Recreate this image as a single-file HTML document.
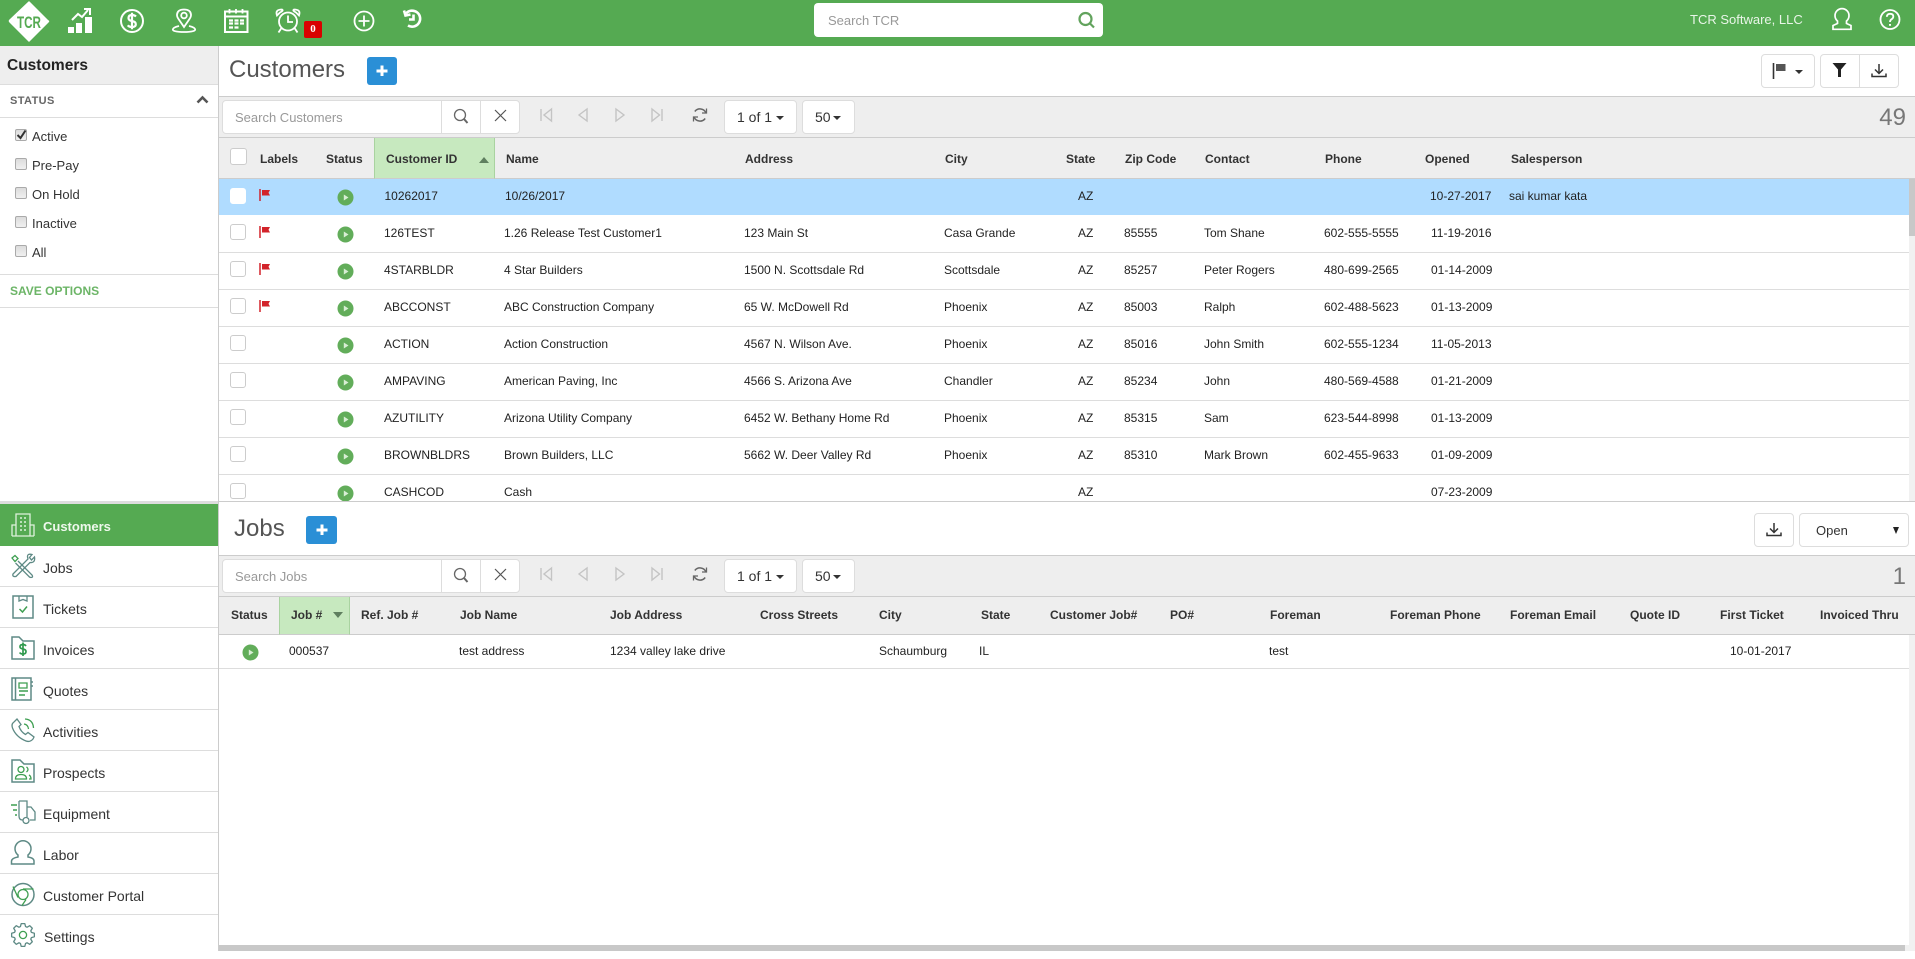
<!DOCTYPE html>
<html><head><meta charset="utf-8"><title>TCR Customers</title>
<style>
*{box-sizing:border-box}
html,body{margin:0;padding:0;width:1915px;height:951px;overflow:hidden;background:#fff;font-family:"Liberation Sans",Arial,sans-serif;color:#333}
.a{position:absolute}
.t{position:absolute;white-space:nowrap}
svg{position:absolute;display:block;overflow:visible}
#top{left:0;top:0;width:1915px;height:46px;background:#55aa52}
.hd{position:absolute;height:40px;line-height:42px;font-size:12px;font-weight:bold;color:#333;white-space:nowrap}
.row{position:absolute;left:219px;width:1690px;height:37px;border-bottom:1px solid #ddd;font-size:12px;color:#222;line-height:34px}
.row span{position:absolute;top:0;white-space:nowrap}
.row i{position:absolute;left:11px;top:8px;width:16px;height:16px;border:1px solid #ccc;border-radius:3px;background:#fff}
.fl{position:absolute;left:40px;top:10px}
.st{position:absolute;left:117.500px;top:9.500px}
.btn{position:absolute;background:#fff;border:1px solid #ddd;border-radius:4px}
.side{position:absolute;left:0;width:218px;border-bottom:1px solid #ddd;font-size:14px;color:#333}
.side b{position:absolute;left:43px;top:0;font-weight:normal;white-space:nowrap}
.cb{position:absolute;left:15px;width:12px;height:12px;border:1px solid #aaa;border-radius:2px;background:linear-gradient(#dcdcdc,#f0f0f0)}
.lb{position:absolute;left:32px;font-size:13px;color:#333;white-space:nowrap;line-height:16px}
.caret{position:absolute;width:0;height:0;border-left:4px solid transparent;border-right:4px solid transparent;border-top:4px solid #333}
</style></head><body>

<div class="a" id="top"></div>
<!-- logo -->
<svg style="left:0;top:0" width="60" height="46" viewBox="0 0 60 46">
<path d="M29 2 L48 21 Q49 21 48 22 L29 41 L10 22 Q9 21 10 20 Z" fill="#fff" stroke="#fff" stroke-width="1.500" stroke-linejoin="round"/>
<text x="17" y="28" font-family="Liberation Sans" font-size="17" font-weight="bold" fill="#55aa52" textLength="24" lengthAdjust="spacingAndGlyphs">TCR</text>
</svg>
<!-- chart -->
<svg style="left:60px;top:0" width="40" height="46" viewBox="60 0 40 46" fill="#fff" stroke="none">
<rect x="68" y="27" width="6" height="6"/><rect x="76" y="23" width="6" height="10"/><rect x="85" y="17" width="7" height="16"/>
<path d="M72 20 L78 14 L82 17 L88 10" fill="none" stroke="#fff" stroke-width="2"/>
<path d="M84 9 L90 9 L90 15" fill="none" stroke="#fff" stroke-width="2"/>
</svg>
<!-- dollar -->
<svg style="left:115px;top:4px" width="34" height="34" viewBox="115 4 34 34">
<circle cx="132" cy="21" r="11" fill="none" stroke="#fff" stroke-width="2"/>
<path d="M136 16.500 Q134.500 15 132 15 Q128.500 15 128.500 18 Q128.500 20.500 132 21 Q135.800 21.700 135.800 24.200 Q135.800 27 132 27 Q129 27 127.800 25.300 M132 12.800 V29.200" fill="none" stroke="#fff" stroke-width="2.200"/>
</svg>
<!-- pin -->
<svg style="left:168px;top:4px" width="34" height="34" viewBox="168 4 34 34" fill="none" stroke="#fff" stroke-width="1.800">
<path d="M184 27 L178.500 19 Q176.800 16.500 177 14.500 Q177.500 9.500 184 9.500 Q190.500 9.500 191 14.500 Q191.200 16.500 189.500 19 Z"/>
<circle cx="184" cy="15.500" r="2.800"/>
<path d="M179 26 Q172.800 27.500 172.800 29.500 Q172.800 32 184 32 Q195.200 32 195.200 29.500 Q195.200 27.500 189 26"/>
</svg>
<!-- calendar -->
<svg style="left:220px;top:4px" width="34" height="34" viewBox="220 4 34 34" fill="none" stroke="#fff">
<rect x="225" y="11.500" width="22.500" height="20.500" stroke-width="2"/>
<path d="M225 16.500 H247.500" stroke-width="2"/>
<path d="M229.500 9 V13.500 M236 9 V13.500 M242.500 9 V13.500" stroke-width="1.800"/>
<path d="M229 20.500 H233 M234.500 20.500 H238.500 M240 20.500 H244 M229 23.500 H233 M234.500 23.500 H238.500 M240 23.500 H244 M229 27.500 H233 M234.500 27.500 H238.500" stroke-width="2.200"/>
</svg>
<!-- alarm -->
<svg style="left:272px;top:4px" width="34" height="34" viewBox="272 4 34 34" fill="none" stroke="#fff" stroke-width="1.800">
<circle cx="288" cy="21.500" r="9"/>
<path d="M288 15.500 V22 H293"/>
<path d="M277 15.500 Q274.800 9.500 282 9.500 Q284 10.500 280 12.500 Z M299 15.500 Q301.200 9.500 294 9.500 Q292 10.500 296 12.500 Z"/>
<path d="M281.500 28 L278.500 32.500 M294.500 28 L297.500 32.500"/>
</svg>
<div class="a" style="left:304px;top:21px;width:18px;height:17px;background:#d90000;border-radius:2px;color:#fff;font:bold 11px/17px 'Liberation Serif',serif;text-align:center">0</div>
<!-- plus -->
<svg style="left:350px;top:7px" width="28" height="28" viewBox="350 7 28 28" fill="none" stroke="#fff" stroke-width="1.800">
<circle cx="364" cy="21" r="9.500"/><path d="M364 15.500 V26.500 M358.500 21 H369.500"/>
</svg>
<!-- history -->
<svg style="left:400px;top:6px" width="28" height="28" viewBox="400 6 28 28" fill="none" stroke="#fff" stroke-width="2.600">
<path d="M406 13.500 A8 8 0 1 1 408 25.500"/>
<path d="M404 10.500 L405.500 15.500 L410.500 14.500" stroke-width="2.600"/>
<path d="M413.500 14.500 V19.500 H409"/>
</svg>
<!-- search -->
<div class="a" style="left:814px;top:3px;width:289px;height:34px;background:#fff;border-radius:4px"></div>
<div class="t" style="left:828px;top:3px;line-height:36px;font-size:13px;color:#999">Search TCR</div>
<svg style="left:1076px;top:10px" width="20" height="20" viewBox="0 0 20 20" fill="none" stroke="#62a35d" stroke-width="2.200">
<circle cx="9.500" cy="9" r="6"/><path d="M14 13.500 L18 17.500"/>
</svg>
<div class="t" style="left:1690px;top:0;line-height:40px;font-size:13px;color:#e9f5e8">TCR Software, LLC</div>
<svg style="left:1828px;top:6px" width="28" height="28" viewBox="1828 6 28 28" fill="none" stroke="#fff" stroke-width="1.700">
<path d="M1837.500 21 A7 7 0 1 1 1846.500 21 L1846.500 23.500 L1851 25.500 V29.300 H1833 V25.500 L1837.500 23.500 Z"/>
</svg>
<svg style="left:1876px;top:5px" width="28" height="28" viewBox="1876 5 28 28" fill="none" stroke="#fff" stroke-width="1.800">
<circle cx="1890" cy="19.500" r="9.500"/>
<path d="M1886.800 16.800 Q1887 13.800 1890.200 13.800 Q1893.300 13.800 1893.300 16.500 Q1893.300 18.300 1891.500 19.300 Q1890 20.200 1890 22"/>
<path d="M1890 24 V25.800" stroke-width="2"/>
</svg>

<!-- left sidebar upper -->
<div class="a" style="left:218px;top:46px;width:1px;height:905px;background:#ccc"></div>
<div class="a" style="left:0;top:46px;width:218px;height:39px;background:#eee;border-bottom:1px solid #ddd"></div>
<div class="t" style="left:7px;top:47px;line-height:37px;font-size:15.500px;font-weight:bold;color:#222">Customers</div>
<div class="t" style="left:10px;top:86px;line-height:31px;font-size:11px;font-weight:bold;color:#666;letter-spacing:.4px">STATUS</div>
<svg style="left:196px;top:95px" width="13" height="9" viewBox="0 0 13 9" fill="none" stroke="#555" stroke-width="2.600"><path d="M1.500 7.500 L6.500 2.500 L11.500 7.500"/></svg>
<div class="a" style="left:0;top:117px;width:218px;height:1px;background:#ddd"></div>
<div class="cb" style="top:129px"></div>
<svg style="left:16px;top:129px" width="12" height="11" viewBox="0 0 12 11" fill="none" stroke="#333" stroke-width="2"><path d="M1.500 6 L4.500 9 L9.500 1.500"/></svg>
<div class="lb" style="top:129px">Active</div>
<div class="cb" style="top:158px"></div><div class="lb" style="top:158px">Pre-Pay</div>
<div class="cb" style="top:187px"></div><div class="lb" style="top:187px">On Hold</div>
<div class="cb" style="top:216px"></div><div class="lb" style="top:216px">Inactive</div>
<div class="cb" style="top:245px"></div><div class="lb" style="top:245px">All</div>
<div class="a" style="left:0;top:274px;width:218px;height:1px;background:#ddd"></div>
<div class="t" style="left:10px;top:275px;line-height:33px;font-size:12px;font-weight:bold;color:#6cb567">SAVE OPTIONS</div>
<div class="a" style="left:0;top:307px;width:218px;height:1px;background:#ddd"></div>

<!-- left sidebar nav -->
<div class="a" style="left:0;top:501px;width:218px;height:3px;background:#ddd"></div>
<div class="a" style="left:0;top:504px;width:218px;height:42px;background:#55aa52"></div>
<div class="t" style="left:43px;top:504px;line-height:46px;font-size:13px;font-weight:bold;color:#eef8ec">Customers</div>
<div class="side" style="top:546px;height:41px;line-height:44px"><b>Jobs</b></div>
<div class="side" style="top:587px;height:41px;line-height:44px"><b>Tickets</b></div>
<div class="side" style="top:628px;height:41px;line-height:44px"><b>Invoices</b></div>
<div class="side" style="top:669px;height:41px;line-height:44px"><b>Quotes</b></div>
<div class="side" style="top:710px;height:41px;line-height:44px"><b>Activities</b></div>
<div class="side" style="top:751px;height:41px;line-height:44px"><b>Prospects</b></div>
<div class="side" style="top:792px;height:41px;line-height:44px"><b>Equipment</b></div>
<div class="side" style="top:833px;height:41px;line-height:44px"><b>Labor</b></div>
<div class="side" style="top:874px;height:41px;line-height:44px"><b>Customer Portal</b></div>
<div class="side" style="top:915px;height:36px;line-height:44px;border:0"><b style="left:44px">Settings</b></div>

<!-- nav icons -->
<svg style="left:0;top:500px" width="46" height="451" viewBox="0 500 46 451" fill="none" stroke-width="1.300">
<!-- customers building -->
<g stroke="#dff2dc">
<path d="M16 536 V514 H30 V536 M12 536 V525 H16 M30 525 H34 V536 M12 536 H34"/>
<path d="M20 518 H22 M24 518 H26 M20 522 H22 M24 522 H26 M20 526 H22 M24 526 H26 M20 530 H22 M24 530 H26" stroke-width="1.500"/>
</g>
<!-- jobs -->
<g stroke="#5e8a85">
<path d="M13 574 L28 559 Q26 553 32 554.500 L29.500 557.500 L31.500 560 L34.500 557 Q35.500 563 30 562.500 L16 576.500 Q12 577 13 574 Z"/>
<path d="M18 561 L32 575 Q33.500 577.500 31 577.500 Q29.500 577.500 28.500 576 L15.500 563"/>
</g>
<path d="M12 558 L15 555.500 L18 558.500 L15 561.500 Z" stroke="#3f9f52"/>
<!-- tickets -->
<path d="M13 596 H33 V618 H13 Z" stroke="#5e8a85" stroke-width="1.500"/>
<path d="M19 596 V601 L23 599.500 L27 601 V596" stroke="#5e8a85"/>
<path d="M19.500 609 L22.500 612 L27 606.500" stroke="#3f9f52" stroke-width="1.500"/>
<!-- invoices -->
<path d="M12 637 H19 L23 641 H34 V659 H12 Z" stroke="#5e8a85" stroke-width="1.500"/>
<path d="M26 646 Q25 644.500 23 644.500 Q20 644.500 20 646.800 Q20 648.600 23 649 Q26 649.500 26 651.500 Q26 654 23 654 Q20.500 654 19.700 652.500 M23 642.500 V656" stroke="#2f9a4d" stroke-width="1.700"/>
<!-- quotes -->
<path d="M12 678 H31 V700 H12 Z M15.500 678 V700" stroke="#5e8a85" stroke-width="1.500"/>
<path d="M31 682 H33 M31 686 H33" stroke="#5e8a85" stroke-width="1.500"/>
<path d="M19 683 H27 V688 H19 Z" stroke="#3f9f52"/>
<path d="M19 691 H28 M19 695 H25" stroke="#3f9f52" stroke-width="1.500"/>
<!-- activities -->
<path d="M14 722 Q11 724 12.500 728 Q16 737 26 741 Q30 742.500 33 739 L34 737 L28 732.500 L25.500 734.500 Q21 732 19 726.500 L21 724.500 L17 719 Z" stroke="#5e8a85" stroke-width="1.300"/>
<path d="M24 724 Q28 724.500 28.500 729 M25 719 Q33 719.500 33.500 728" stroke="#3f9f52"/>
<!-- prospects -->
<path d="M12 760 H20 L24 764 H34 V782 H12 Z" stroke="#5e8a85" stroke-width="1.500"/>
<circle cx="21" cy="769.500" r="3" stroke="#3f9f52"/>
<path d="M15.500 779 Q15.500 774.500 21 774.500 Q26.500 774.500 26.500 779 Z M26.500 766.800 Q29.500 769.500 26.500 772 M29 775 Q31 776 31 779 H29" stroke="#3f9f52"/>
<!-- equipment -->
<path d="M19 801 H27 V817 M19 801 V816 Q19 820 22.500 820" stroke="#5e8a85" stroke-width="1.300"/>
<path d="M27 807 H31 L35 812 V820 H30" stroke="#5e8a85" stroke-width="1.300"/>
<circle cx="26" cy="820.500" r="3" stroke="#5e8a85" stroke-width="1.300"/>
<path d="M11 805 H17 M13 810 H17 M15 815 H17" stroke="#3f9f52" stroke-width="1.500"/>
<!-- labor -->
<path d="M18 855 A8 8 0 1 1 28 855 V857 Q34 858 34 861 V864 H11.500 V861 Q12 858 18 857 Z" stroke="#5e8a85" stroke-width="1.500"/>
<!-- portal -->
<circle cx="23" cy="894.500" r="11" stroke="#5e8a85" stroke-width="1.500"/>
<path d="M23 889 H33.500 M18 897.500 L13 886.500 M26 899.500 L22 905.500" stroke="#3f9f52" stroke-width="1.300"/>
<circle cx="23" cy="894.500" r="5" stroke="#3f9f52" stroke-width="1.300"/>
<!-- settings -->
<path transform="translate(23,935)" stroke="#5e8a85" stroke-width="1.300" stroke-linejoin="round" d="M8.420 -2.570 L11.360 -1.800 L11.360 1.800 L8.420 2.570 L7.770 4.130 L9.300 6.760 L6.760 9.300 L4.130 7.770 L2.570 8.420 L1.800 11.360 L-1.800 11.360 L-2.570 8.420 L-4.130 7.770 L-6.760 9.300 L-9.300 6.760 L-7.770 4.130 L-8.420 2.570 L-11.360 1.800 L-11.360 -1.800 L-8.420 -2.570 L-7.770 -4.130 L-9.300 -6.760 L-6.760 -9.300 L-4.130 -7.770 L-2.570 -8.420 L-1.800 -11.360 L1.800 -11.360 L2.570 -8.420 L4.130 -7.770 L6.760 -9.300 L9.300 -6.760 L7.770 -4.130 Z"/>
<circle cx="23" cy="935" r="3.600" stroke="#3f9f52" stroke-width="1.300"/>
</svg>

<!-- CUSTOMERS PANEL -->
<div class="t" style="left:229px;top:51px;line-height:38px;font-size:24px;color:#555">Customers</div>
<div class="a" style="left:367px;top:57px;width:30px;height:28px;background:#2a8fd6;border-radius:3px"></div>
<svg style="left:375px;top:64px" width="14" height="14" viewBox="0 0 14 14"><path d="M7 1.500 V12 M1.500 7 H12.500" stroke="#fff" stroke-width="3"/></svg>

<div class="btn" style="left:1761px;top:54px;width:54px;height:34px"></div>
<svg style="left:1772px;top:62px" width="18" height="18" viewBox="0 0 18 18"><path d="M1.500 1 V17" stroke="#333" stroke-width="1.600"/><path d="M4 2 H13.500 V9 H4 Z" fill="#555"/></svg>
<div class="caret" style="left:1795px;top:70px"></div>
<div class="btn" style="left:1820px;top:54px;width:79px;height:34px"></div>
<div class="a" style="left:1859px;top:54px;width:1px;height:34px;background:#ddd"></div>
<svg style="left:1832px;top:62px" width="15" height="16" viewBox="0 0 15 16"><path d="M0.500 1 H14.500 L9 7.500 V15 L6 15 V7.500 Z" fill="#222"/></svg>
<svg style="left:1871px;top:63px" width="16" height="15" viewBox="0 0 16 15" fill="none" stroke="#333" stroke-width="1.500"><path d="M8 1 V10 M4 6.500 L8 10.500 L12 6.500 M1 10.500 V13.500 H15 V10.500"/></svg>

<div class="a" style="left:219px;top:96px;width:1696px;height:42px;background:#eee;border-top:1px solid #ccc;border-bottom:1px solid #ccc"></div>
<div class="btn" style="left:222px;top:100px;width:298px;height:34px"></div>
<div class="a" style="left:441px;top:100px;width:1px;height:34px;background:#ddd"></div>
<div class="a" style="left:480px;top:100px;width:1px;height:34px;background:#ddd"></div>
<div class="t" style="left:235px;top:100px;line-height:36px;font-size:13px;color:#999">Search Customers</div>
<svg style="left:453px;top:108px" width="16" height="17" viewBox="0 0 16 17" fill="none" stroke="#666" stroke-width="1.300"><circle cx="7" cy="7" r="5.500"/><path d="M11 11 L14.500 15" stroke-width="2"/></svg>
<svg style="left:494px;top:109px" width="13" height="13" viewBox="0 0 13 13" fill="none" stroke="#555" stroke-width="1.200"><path d="M1 1 L12 12 M12 1 L1 12"/></svg>
<svg style="left:540px;top:108px" width="125" height="16" viewBox="540 108 125 16" fill="none" stroke="#c4c4c4" stroke-width="1.400">
<path d="M541 109 V121 M551.500 109 L544 115 L551.500 121 Z"/>
<path d="M587 109 L579 115 L587 121 Z"/>
<path d="M616 109 L624 115 L616 121 Z"/>
<path d="M652 109 L659.500 115 L652 121 Z M662 109 V121"/>
</svg>
<svg style="left:692px;top:107px" width="16" height="16" viewBox="0 0 16 16" fill="none" stroke="#666" stroke-width="1.500"><path d="M14 6 A6.500 6.500 0 0 0 2.800 4.500 M2 10 A6.500 6.500 0 0 0 13.200 11.500"/><path d="M14.500 1.500 V6 H10 M1.500 14.500 V10 H6" stroke-width="1.300"/></svg>
<div class="btn" style="left:724px;top:100px;width:73px;height:34px"></div>
<div class="t" style="left:737px;top:100px;line-height:34px;font-size:14px;color:#333">1 of 1</div>
<div class="caret" style="left:776px;top:116px"></div>
<div class="btn" style="left:802px;top:100px;width:53px;height:34px"></div>
<div class="t" style="left:815px;top:100px;line-height:34px;font-size:14px;color:#333">50</div>
<div class="caret" style="left:833px;top:116px"></div>
<div class="t" style="right:9px;top:98px;line-height:39px;font-size:24px;color:#777">49</div>

<!-- customers table head -->
<div class="a" style="left:219px;top:138px;width:1696px;height:41px;background:#eee;border-bottom:1px solid #ccc"></div>
<div class="a" style="left:374px;top:138px;width:121px;height:41px;background:#c7e9bf;border-left:1px solid #a9d3a0;border-right:1px solid #a9d3a0;border-bottom:1px solid #ccc"></div>
<div class="a" style="left:230px;top:148px;width:17px;height:17px;background:#fff;border:1px solid #ccc;border-radius:3px"></div>
<div class="hd" style="left:260px;top:138px">Labels</div>
<div class="hd" style="left:326px;top:138px">Status</div>
<div class="hd" style="left:386px;top:138px">Customer ID</div>
<div class="a" style="left:479px;top:157px;width:0;height:0;border-left:5px solid transparent;border-right:5px solid transparent;border-bottom:6px solid #5f7f5f"></div>
<div class="hd" style="left:506px;top:138px">Name</div>
<div class="hd" style="left:745px;top:138px">Address</div>
<div class="hd" style="left:945px;top:138px">City</div>
<div class="hd" style="left:1066px;top:138px">State</div>
<div class="hd" style="left:1125px;top:138px">Zip Code</div>
<div class="hd" style="left:1205px;top:138px">Contact</div>
<div class="hd" style="left:1325px;top:138px">Phone</div>
<div class="hd" style="left:1425px;top:138px">Opened</div>
<div class="hd" style="left:1511px;top:138px">Salesperson</div>

<!-- customers rows -->
<div class="a" style="left:219px;top:179px;width:1696px;height:322px;overflow:hidden">
<div class="row" style="left:0;top:0;height:36px;background:#b0dcff;border-color:#b0dcff"><i style="border-color:#fff;top:9px"></i>
<svg class="fl" width="12" height="13" viewBox="0 0 12 13"><path d="M1 0 V12" stroke="#d2232a" stroke-width="1.500"/><path d="M3 1 H11 L9.500 3.700 L11 6.500 H3 Z" fill="#d2232a"/></svg>
<svg class="st" width="17" height="17" viewBox="0 0 17 17"><circle cx="8.500" cy="8.500" r="8" fill="#62ad5a"/><path d="M6.800 5.500 L11.500 8.500 L6.800 11.500 Z" fill="#d8eed4"/></svg>
<span style="left:165.500px">10262017</span><span style="left:286px">10/26/2017</span><span style="left:859px">AZ</span><span style="left:1211px">10-27-2017</span><span style="left:1290px">sai kumar kata</span></div>

<div class="row" style="left:0;top:37px"><i></i>
<svg class="fl" width="12" height="13" viewBox="0 0 12 13"><path d="M1 0 V12" stroke="#d2232a" stroke-width="1.500"/><path d="M3 1 H11 L9.500 3.700 L11 6.500 H3 Z" fill="#d2232a"/></svg>
<svg class="st" width="17" height="17" viewBox="0 0 17 17"><circle cx="8.500" cy="8.500" r="8" fill="#62ad5a"/><path d="M6.800 5.500 L11.500 8.500 L6.800 11.500 Z" fill="#d8eed4"/></svg>
<span style="left:165px">126TEST</span><span style="left:285px">1.26 Release Test Customer1</span><span style="left:525px">123 Main St</span><span style="left:725px">Casa Grande</span><span style="left:859px">AZ</span><span style="left:905px">85555</span><span style="left:985px">Tom Shane</span><span style="left:1105px">602-555-5555</span><span style="left:1212px">11-19-2016</span></div>

<div class="row" style="left:0;top:74px"><i></i>
<svg class="fl" width="12" height="13" viewBox="0 0 12 13"><path d="M1 0 V12" stroke="#d2232a" stroke-width="1.500"/><path d="M3 1 H11 L9.500 3.700 L11 6.500 H3 Z" fill="#d2232a"/></svg>
<svg class="st" width="17" height="17" viewBox="0 0 17 17"><circle cx="8.500" cy="8.500" r="8" fill="#62ad5a"/><path d="M6.800 5.500 L11.500 8.500 L6.800 11.500 Z" fill="#d8eed4"/></svg>
<span style="left:165px">4STARBLDR</span><span style="left:285px">4 Star Builders</span><span style="left:525px">1500 N. Scottsdale Rd</span><span style="left:725px">Scottsdale</span><span style="left:859px">AZ</span><span style="left:905px">85257</span><span style="left:985px">Peter Rogers</span><span style="left:1105px">480-699-2565</span><span style="left:1212px">01-14-2009</span></div>

<div class="row" style="left:0;top:111px"><i></i>
<svg class="fl" width="12" height="13" viewBox="0 0 12 13"><path d="M1 0 V12" stroke="#d2232a" stroke-width="1.500"/><path d="M3 1 H11 L9.500 3.700 L11 6.500 H3 Z" fill="#d2232a"/></svg>
<svg class="st" width="17" height="17" viewBox="0 0 17 17"><circle cx="8.500" cy="8.500" r="8" fill="#62ad5a"/><path d="M6.800 5.500 L11.500 8.500 L6.800 11.500 Z" fill="#d8eed4"/></svg>
<span style="left:165px">ABCCONST</span><span style="left:285px">ABC Construction Company</span><span style="left:525px">65 W. McDowell Rd</span><span style="left:725px">Phoenix</span><span style="left:859px">AZ</span><span style="left:905px">85003</span><span style="left:985px">Ralph</span><span style="left:1105px">602-488-5623</span><span style="left:1212px">01-13-2009</span></div>

<div class="row" style="left:0;top:148px"><i></i>
<svg class="st" width="17" height="17" viewBox="0 0 17 17"><circle cx="8.500" cy="8.500" r="8" fill="#62ad5a"/><path d="M6.800 5.500 L11.500 8.500 L6.800 11.500 Z" fill="#d8eed4"/></svg>
<span style="left:165px">ACTION</span><span style="left:285px">Action Construction</span><span style="left:525px">4567 N. Wilson Ave.</span><span style="left:725px">Phoenix</span><span style="left:859px">AZ</span><span style="left:905px">85016</span><span style="left:985px">John Smith</span><span style="left:1105px">602-555-1234</span><span style="left:1212px">11-05-2013</span></div>

<div class="row" style="left:0;top:185px"><i></i>
<svg class="st" width="17" height="17" viewBox="0 0 17 17"><circle cx="8.500" cy="8.500" r="8" fill="#62ad5a"/><path d="M6.800 5.500 L11.500 8.500 L6.800 11.500 Z" fill="#d8eed4"/></svg>
<span style="left:165px">AMPAVING</span><span style="left:285px">American Paving, Inc</span><span style="left:525px">4566 S. Arizona Ave</span><span style="left:725px">Chandler</span><span style="left:859px">AZ</span><span style="left:905px">85234</span><span style="left:985px">John</span><span style="left:1105px">480-569-4588</span><span style="left:1212px">01-21-2009</span></div>

<div class="row" style="left:0;top:222px"><i></i>
<svg class="st" width="17" height="17" viewBox="0 0 17 17"><circle cx="8.500" cy="8.500" r="8" fill="#62ad5a"/><path d="M6.800 5.500 L11.500 8.500 L6.800 11.500 Z" fill="#d8eed4"/></svg>
<span style="left:165px">AZUTILITY</span><span style="left:285px">Arizona Utility Company</span><span style="left:525px">6452 W. Bethany Home Rd</span><span style="left:725px">Phoenix</span><span style="left:859px">AZ</span><span style="left:905px">85315</span><span style="left:985px">Sam</span><span style="left:1105px">623-544-8998</span><span style="left:1212px">01-13-2009</span></div>

<div class="row" style="left:0;top:259px"><i></i>
<svg class="st" width="17" height="17" viewBox="0 0 17 17"><circle cx="8.500" cy="8.500" r="8" fill="#62ad5a"/><path d="M6.800 5.500 L11.500 8.500 L6.800 11.500 Z" fill="#d8eed4"/></svg>
<span style="left:165px">BROWNBLDRS</span><span style="left:285px">Brown Builders, LLC</span><span style="left:525px">5662 W. Deer Valley Rd</span><span style="left:725px">Phoenix</span><span style="left:859px">AZ</span><span style="left:905px">85310</span><span style="left:985px">Mark Brown</span><span style="left:1105px">602-455-9633</span><span style="left:1212px">01-09-2009</span></div>

<div class="row" style="left:0;top:296px"><i></i>
<svg class="st" width="17" height="17" viewBox="0 0 17 17"><circle cx="8.500" cy="8.500" r="8" fill="#62ad5a"/><path d="M6.800 5.500 L11.500 8.500 L6.800 11.500 Z" fill="#d8eed4"/></svg>
<span style="left:165px">CASHCOD</span><span style="left:285px">Cash</span><span style="left:859px">AZ</span><span style="left:1212px">07-23-2009</span></div>

<div class="a" style="left:1690px;top:0;width:6px;height:322px;background:#f1f1f1"></div>
<div class="a" style="left:1690px;top:0;width:6px;height:57px;background:#c8c8c8"></div>
</div>

<div class="a" style="left:219px;top:501px;width:1696px;height:1px;background:#ccc"></div>

<!-- JOBS PANEL -->
<div class="t" style="left:234px;top:510px;line-height:38px;font-size:24px;color:#555">Jobs</div>
<div class="a" style="left:306px;top:516px;width:31px;height:28px;background:#2a8fd6;border-radius:3px"></div>
<svg style="left:314.500px;top:523px" width="14" height="14" viewBox="0 0 14 14"><path d="M7 1.500 V12 M1.500 7 H12.500" stroke="#fff" stroke-width="3"/></svg>
<div class="btn" style="left:1754px;top:513px;width:40px;height:34px"></div>
<svg style="left:1766px;top:522px" width="16" height="15" viewBox="0 0 16 15" fill="none" stroke="#333" stroke-width="1.500"><path d="M8 1 V10 M4 6.500 L8 10.500 L12 6.500 M1 10.500 V13.500 H15 V10.500"/></svg>
<div class="btn" style="left:1799px;top:513px;width:110px;height:34px"></div>
<div class="t" style="left:1816px;top:513px;line-height:35px;font-size:13px;color:#333">Open</div>
<div class="a" style="left:1893px;top:527px;width:0;height:0;border-left:3.500px solid transparent;border-right:3.500px solid transparent;border-top:7px solid #222"></div>

<div class="a" style="left:219px;top:555px;width:1696px;height:42px;background:#eee;border-top:1px solid #ccc;border-bottom:1px solid #ccc"></div>
<div class="btn" style="left:222px;top:559px;width:298px;height:34px"></div>
<div class="a" style="left:441px;top:559px;width:1px;height:34px;background:#ddd"></div>
<div class="a" style="left:480px;top:559px;width:1px;height:34px;background:#ddd"></div>
<div class="t" style="left:235px;top:559px;line-height:36px;font-size:13px;color:#999">Search Jobs</div>
<svg style="left:453px;top:567px" width="16" height="17" viewBox="0 0 16 17" fill="none" stroke="#666" stroke-width="1.300"><circle cx="7" cy="7" r="5.500"/><path d="M11 11 L14.500 15" stroke-width="2"/></svg>
<svg style="left:494px;top:568px" width="13" height="13" viewBox="0 0 13 13" fill="none" stroke="#555" stroke-width="1.200"><path d="M1 1 L12 12 M12 1 L1 12"/></svg>
<svg style="left:540px;top:567px" width="125" height="16" viewBox="540 108 125 16" fill="none" stroke="#c4c4c4" stroke-width="1.400">
<path d="M541 109 V121 M551.500 109 L544 115 L551.500 121 Z"/>
<path d="M587 109 L579 115 L587 121 Z"/>
<path d="M616 109 L624 115 L616 121 Z"/>
<path d="M652 109 L659.500 115 L652 121 Z M662 109 V121"/>
</svg>
<svg style="left:692px;top:566px" width="16" height="16" viewBox="0 0 16 16" fill="none" stroke="#666" stroke-width="1.500"><path d="M14 6 A6.500 6.500 0 0 0 2.800 4.500 M2 10 A6.500 6.500 0 0 0 13.200 11.500"/><path d="M14.500 1.500 V6 H10 M1.500 14.500 V10 H6" stroke-width="1.300"/></svg>
<div class="btn" style="left:724px;top:559px;width:73px;height:34px"></div>
<div class="t" style="left:737px;top:559px;line-height:34px;font-size:14px;color:#333">1 of 1</div>
<div class="caret" style="left:776px;top:575px"></div>
<div class="btn" style="left:802px;top:559px;width:53px;height:34px"></div>
<div class="t" style="left:815px;top:559px;line-height:34px;font-size:14px;color:#333">50</div>
<div class="caret" style="left:833px;top:575px"></div>
<div class="t" style="right:9px;top:557px;line-height:39px;font-size:24px;color:#777">1</div>

<!-- jobs head -->
<div class="a" style="left:219px;top:597px;width:1696px;height:38px;background:#eee;border-bottom:1px solid #ccc"></div>
<div class="a" style="left:279px;top:597px;width:71px;height:38px;background:#c7e9bf;border-left:1px solid #a9d3a0;border-right:1px solid #a9d3a0;border-bottom:1px solid #ccc"></div>
<div class="hd" style="left:231px;top:597px;line-height:37px">Status</div>
<div class="hd" style="left:291px;top:597px;line-height:37px">Job #</div>
<div class="a" style="left:333px;top:612px;width:0;height:0;border-left:5px solid transparent;border-right:5px solid transparent;border-top:6px solid #5f7f5f"></div>
<div class="hd" style="left:361px;top:597px;line-height:37px">Ref. Job #</div>
<div class="hd" style="left:460px;top:597px;line-height:37px">Job Name</div>
<div class="hd" style="left:610px;top:597px;line-height:37px">Job Address</div>
<div class="hd" style="left:760px;top:597px;line-height:37px">Cross Streets</div>
<div class="hd" style="left:879px;top:597px;line-height:37px">City</div>
<div class="hd" style="left:981px;top:597px;line-height:37px">State</div>
<div class="hd" style="left:1050px;top:597px;line-height:37px">Customer Job#</div>
<div class="hd" style="left:1170px;top:597px;line-height:37px">PO#</div>
<div class="hd" style="left:1270px;top:597px;line-height:37px">Foreman</div>
<div class="hd" style="left:1390px;top:597px;line-height:37px">Foreman Phone</div>
<div class="hd" style="left:1510px;top:597px;line-height:37px">Foreman Email</div>
<div class="hd" style="left:1630px;top:597px;line-height:37px">Quote ID</div>
<div class="hd" style="left:1720px;top:597px;line-height:37px">First Ticket</div>
<div class="hd" style="left:1820px;top:597px;line-height:37px">Invoiced Thru</div>

<div class="row" style="top:635px;height:34px;width:1690px;line-height:32px">
<svg class="st" style="left:23px;top:9px" width="17" height="17" viewBox="0 0 17 17"><circle cx="8.500" cy="8.500" r="8" fill="#62ad5a"/><path d="M6.800 5.500 L11.500 8.500 L6.800 11.500 Z" fill="#d8eed4"/></svg>
<span style="left:70px">000537</span><span style="left:240px">test address</span><span style="left:391px">1234 valley lake drive</span><span style="left:660px">Schaumburg</span><span style="left:760px">IL</span><span style="left:1050px">test</span><span style="left:1511px">10-01-2017</span></div>

<div class="a" style="left:1909px;top:635px;width:6px;height:310px;background:#f1f1f1"></div>
<div class="a" style="left:219px;top:945px;width:1686px;height:6px;background:#c8c8c8"></div>
<div class="a" style="left:1905px;top:945px;width:10px;height:6px;background:#f1f1f1"></div>

</body></html>
